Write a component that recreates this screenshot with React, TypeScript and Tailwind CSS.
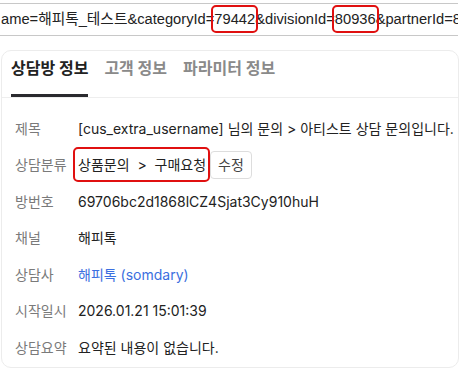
import React from 'react';

const rows: { label: string; value: React.ReactNode }[] = [
  { label: '제목', value: '[cus_extra_username] 님의 문의 > 아티스트 상담 문의입니다.' },
  {
    label: '상담분류',
    value: (
      <span className="flex items-center">
        <span className="relative">
          상품문의&nbsp;&nbsp;&gt;&nbsp;&nbsp;구매요청
          <span className="absolute -left-[5px] -right-[4px] -top-[7px] -bottom-[7px] rounded-[5px] border-2 border-[#e01010]" />
        </span>
        <button className="ml-[4px] h-[28px] rounded-[4px] border border-[#dddddd] bg-white px-[7px] text-[#444]">
          수정
        </button>
      </span>
    ),
  },
  { label: '방번호', value: '69706bc2d1868lCZ4Sjat3Cy910huH' },
  { label: '채널', value: '해피톡' },
  { label: '상담사', value: <span className="text-[#3b6fe0]">해피톡 (somdary)</span> },
  { label: '시작일시', value: '2026.01.21 15:01:39' },
  { label: '상담요약', value: '요약된 내용이 없습니다.' },
];

function Marked({ children }: { children: React.ReactNode }) {
  return (
    <span className="relative">
      {children}
      <span className="absolute -left-[3px] -right-[3px] -top-[6px] -bottom-[6px] rounded-[5px] border-2 border-[#e01010]" />
    </span>
  );
}

export default function App() {
  return (
    <div
      className="h-[369px] w-[459px] overflow-hidden bg-white"
      style={{ fontFamily: 'Inter, "Noto Sans CJK KR", sans-serif' }}
    >
      {/* address bar */}
      <div className="mt-[3px] h-[33px] w-[458px] overflow-hidden border-y border-[#c8c8c8]">
        <div
          className="whitespace-nowrap pl-[1px] text-[14.7px] leading-[31px] text-[#222]"
          style={{ fontFamily: '"Liberation Sans", "Noto Sans CJK KR", sans-serif' }}
        >
          ame=해피톡_테스트&amp;categoryId=<Marked>79442</Marked>&amp;divisionId=<Marked>80936</Marked>&amp;partnerId=8
        </div>
      </div>

      {/* card */}
      <div className="ml-[1px] mt-[14px] h-[318px] rounded-[10px] border border-[#ececec] bg-white">
        <div className="flex border-b border-[#eeeeee] px-[9px] pt-[5px]">
          <div className="border-b-[3px] border-[#2a2a2e] pb-[14px] text-[16px] font-bold text-[#222]">상담방 정보</div>
          <div className="ml-[16px] text-[16px] font-bold text-[#8a8a8a]">고객 정보</div>
          <div className="ml-[16px] text-[16px] font-bold text-[#8a8a8a]">파라미터 정보</div>
        </div>
        <div className="flex flex-col gap-[12.5px] px-[13px] pt-[18px] text-[14px]">
          {rows.map((r) => (
            <div key={r.label} className="flex h-[24px] items-center">
              <div className="w-[63px] shrink-0 text-[#7a7a7a]">{r.label}</div>
              <div className="whitespace-nowrap text-[#222]">{r.value}</div>
            </div>
          ))}
        </div>
      </div>
    </div>
  );
}
